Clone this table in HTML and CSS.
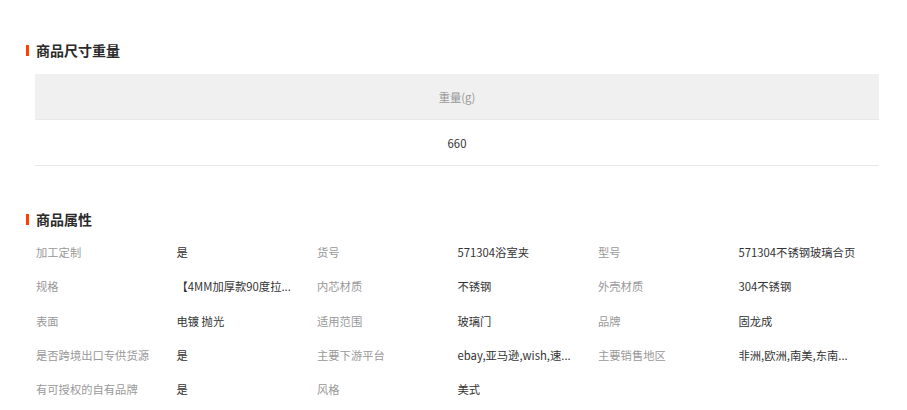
FILE: index.html
```html
<!DOCTYPE html>
<html lang="zh-CN">
<head>
    <meta charset="UTF-8">
    <meta name="viewport" content="width=device-width, initial-scale=1.0">
    <title>商品详情</title>
    <link rel="stylesheet" href="styles.css">
</head>
<body>

    <div class="wrap">
        <h2 class="title">商品尺寸重量</h2>
        <table class="size-table">
            <thead>
                <tr><th>重量(g)</th></tr>
            </thead>
            <tbody>
                <tr><td>660</td></tr>
            </tbody>
        </table>

        <h2 class="title title-attr">商品属性</h2>
        <div class="attrs">
            <div class="label">加工定制</div><div class="value">是</div>
            <div class="label">货号</div><div class="value">571304浴室夹</div>
            <div class="label">型号</div><div class="value">571304不锈钢玻璃合页</div>

            <div class="label">规格</div><div class="value" title="【4MM加厚款90度拉丝】镜面款">【4MM加厚款90度拉...</div>
            <div class="label">内芯材质</div><div class="value">不锈钢</div>
            <div class="label">外壳材质</div><div class="value">304不锈钢</div>

            <div class="label">表面</div><div class="value">电镀 抛光</div>
            <div class="label">适用范围</div><div class="value">玻璃门</div>
            <div class="label">品牌</div><div class="value">固龙成</div>

            <div class="label">是否跨境出口专供货源</div><div class="value">是</div>
            <div class="label">主要下游平台</div><div class="value" title="ebay,亚马逊,wish,速卖通,独立站">ebay,亚马逊,wish,速...</div>
            <div class="label">主要销售地区</div><div class="value" title="非洲,欧洲,南美,东南亚,北美,中东">非洲,欧洲,南美,东南...</div>

            <div class="label">有可授权的自有品牌</div><div class="value">是</div>
            <div class="label">风格</div><div class="value">美式</div>
        </div>
    </div>

</body>
</html>
```

FILE: styles.css
```css
body {
    margin: 0;
    background-color: #fff;
    color: #333;
    font-family: "Noto Sans CJK SC", "Noto Sans", sans-serif;
    font-size: 11.3px;
}
.wrap {
    padding: 40px 28px 0 26px;
}
.title {
    display: flex;
    align-items: center;
    height: 20px;
    margin: 0;
    font-size: 14px;
    font-weight: bold;
    color: #2b2b2b;
}
.title::before {
    content: "";
    width: 3px;
    height: 11px;
    margin-right: 7px;
    background-color: #ff4000; /* accent bar */
}
.title-attr {
    margin-top: 43px;
}
.size-table {
    width: calc(100% - 9px);
    margin: 14px 0 0 9px;
    border-collapse: collapse;
}
.size-table th,
.size-table td {
    height: 45px;
    padding: 0;
    text-align: center;
    border-bottom: 1px solid #e8e8e8;
}
.size-table th {
    background-color: #f0f0f0;
    color: #999;
    font-weight: normal;
}
.attrs {
    display: grid;
    grid-template-columns: repeat(6, 1fr);
    grid-auto-rows: 34.3px;
    align-items: center;
    margin: 6px 0 0 10px;
}
.label {
    color: #999;
    white-space: nowrap;
}
.value {
    white-space: nowrap;
    color: #333;
}
```
